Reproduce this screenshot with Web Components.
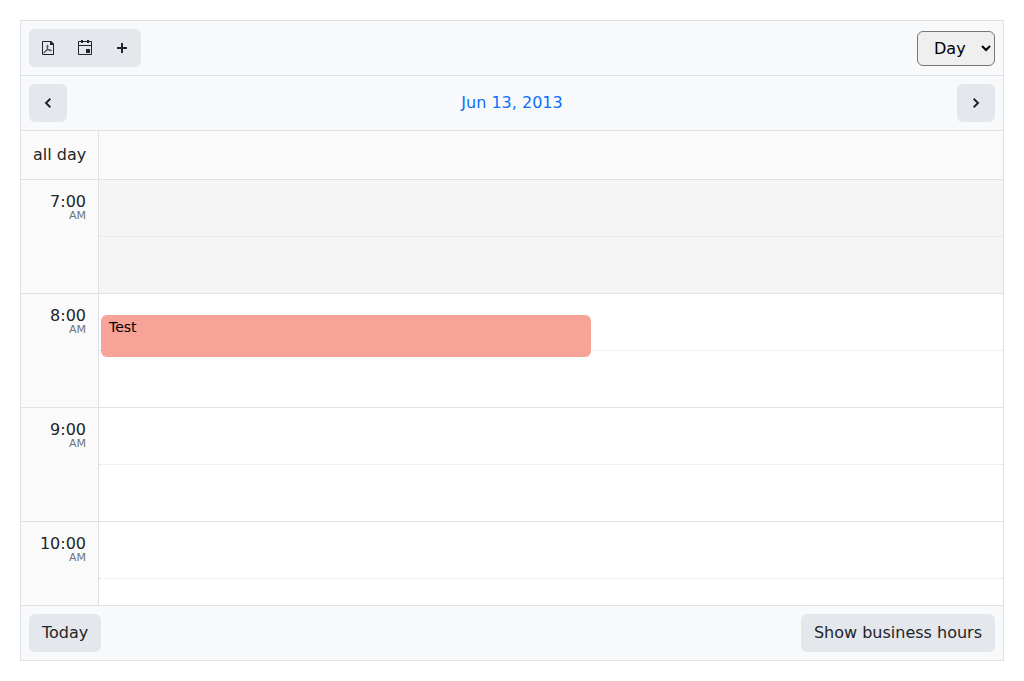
<!DOCTYPE html>
<html lang="en">
<head>
<meta charset="utf-8">
<title>Scheduler</title>
<style>
  html, body { margin: 0; }
  body {
    box-sizing: border-box;
    min-height: 100vh;
    padding: 20px;
    display: flex;
    background: #fff;
    color: #212529;
    font: 16px/24px "DejaVu Sans", sans-serif;
    --border: #dee2e6;
    --bar: #f8f9fb;
    --button: #e4e7eb;
    --radius: 6px;
  }
</style>
</head>
<body>
<day-scheduler></day-scheduler>

<template id="scheduler-template">
  <style>
    :host {
      flex: 1; min-width: 0;
      display: flex; flex-direction: column;
      border: 1px solid var(--border);
    }
    select {
      box-sizing: border-box; width: 78px; height: 35px;
      padding: 0 12px; border: 1px solid #767676; border-radius: var(--radius);
      background: #efefef; color: #000; font: inherit;
    }
    a { color: #0d6efd; text-decoration: none; }
    .group { display: flex; border-radius: var(--radius); background: var(--button); }
    .group tool-button + tool-button { margin-left: -1px; }
    main {
      flex: 1 1 0; min-height: 0;
      overflow-y: auto; scrollbar-width: none;
    }
  </style>
  <tool-bar>
    <div class="group">
      <tool-button icon="pdf" label="Export to PDF"></tool-button>
      <tool-button icon="calendar" label="Pick a date"></tool-button>
      <tool-button icon="plus" label="Add event"></tool-button>
    </div>
    <select aria-label="View"><option>Day</option></select>
  </tool-bar>
  <tool-bar>
    <tool-button icon="prev" label="Previous"></tool-button>
    <a href="#">Jun 13, 2013</a>
    <tool-button icon="next" label="Next"></tool-button>
  </tool-bar>
  <all-day-row>all day</all-day-row>
  <main>
    <hour-row hour="7:00" period="AM" off></hour-row>
    <hour-row hour="8:00" period="AM"><calendar-event>Test</calendar-event></hour-row>
    <hour-row hour="9:00" period="AM"></hour-row>
    <hour-row hour="10:00" period="AM"></hour-row>
  </main>
  <tool-bar footer>
    <tool-button>Today</tool-button>
    <tool-button>Show business hours</tool-button>
  </tool-bar>
</template>

<template id="bar-template">
  <style>
    :host {
      display: flex; align-items: center; justify-content: space-between;
      padding: 8px; background: var(--bar);
      border-bottom: 1px solid var(--border);
    }
    :host([footer]) { border-bottom: 0; border-top: 1px solid var(--border); }
  </style>
  <slot></slot>
</template>

<template id="button-template">
  <style>
    :host { display: block; }
    button {
      box-sizing: border-box; height: 38px; min-width: 38px;
      display: flex; align-items: center; justify-content: center;
      padding: 0 13px; border: 0; border-radius: var(--radius);
      background: var(--button); color: inherit; font: inherit; cursor: pointer;
    }
    button[aria-label] { padding: 0 11px; }
    svg { width: 16px; height: 16px; fill: currentColor; }
  </style>
  <button type="button"><slot></slot></button>
</template>

<template id="all-day-template">
  <style>
    :host {
      display: grid; grid-template-columns: 78px 1fr;
      background: #fafafa; border-bottom: 1px solid var(--border);
    }
    .label {
      padding: 12px; text-align: right; white-space: nowrap;
      box-sizing: border-box; border-right: 1px solid var(--border);
    }
  </style>
  <div class="label"><slot></slot></div>
  <div></div>
</template>

<template id="hour-template">
  <style>
    :host {
      display: grid; grid-template-columns: 78px 1fr;
      box-sizing: border-box; height: 114px;
      border-bottom: 1px solid var(--border);
    }
    .label {
      box-sizing: border-box; padding: 12px 12px 0 0;
      text-align: right; background: #fafafa;
      border-right: 1px solid var(--border);
    }
    .hour { line-height: 19px; }
    .period { font-size: 11px; line-height: 10px; color: #6c757d; }
    .slots { position: relative; display: flex; flex-direction: column; }
    :host([off]) .slots { background: #f5f5f5; }
    .half { height: 56px; border-bottom: 1px dotted var(--border); }
  </style>
  <div class="label"><div class="hour"></div><div class="period"></div></div>
  <div class="slots"><div class="half"></div><slot></slot></div>
</template>

<template id="event-template">
  <style>
    :host {
      position: absolute; top: 21px; left: 2px;
      box-sizing: border-box; width: 54.2%; height: 42px;
      padding: 2px 8px; border-radius: var(--radius);
      background: #f8a398; color: #000; font-size: 14px; line-height: 20px;
    }
  </style>
  <slot></slot>
</template>

<script>
  const ICONS = {
    pdf: '<path fill-rule="evenodd" d="M3 1h8l3 3v11H3a1 1 0 0 1-1-1V2a1 1 0 0 1 1-1zm0 1v12h10V5h-3V2z"/><path d="M10 1h1l3 3v1h-4z"/><path fill="none" stroke="currentColor" stroke-width=".8" d="M7.5 5.200c-.9 0-.5 1.900 0 3.200.6 1.500 1.700 2.300 3.200 2.500.9.1 1-.9-.1-1.100-2-.3-4.300.3-6 1.900-1.400 1-.7 1.700.1.900 1.500-1.500 2.700-3.500 3.100-5.500.2-1.100.1-1.900-.3-1.900z"/>',
    calendar: '<path fill-rule="evenodd" d="M4 0h2v1h4V0h2v1h2a1 1 0 0 1 1 1v12a1 1 0 0 1-1 1H2a1 1 0 0 1-1-1V2a1 1 0 0 1 1-1h2zM2 2v3h12V2h-2v1h-2V2H6v1H4V2zm0 4v8h12V6zm7 3h4v4H9z"/>',
    plus: '<path d="M7 3h2v4h4v2H9v4H7V9H3V7h4z"/>',
    prev: '<path d="M9.600 3 11 4.400 7.400 8 11 11.600 9.600 13l-5-5z"/>',
    next: '<path d="M6.400 3 5 4.400 8.600 8 5 11.600 6.400 13l5-5z"/>'
  };

  function component(name, templateId, setup) {
    customElements.define(name, class extends HTMLElement {
      constructor() {
        super();
        const root = this.attachShadow({ mode: 'open' });
        root.append(document.getElementById(templateId).content.cloneNode(true));
      }
      connectedCallback() { if (setup) setup(this, this.shadowRoot); }
    });
  }

  component('tool-bar', 'bar-template');
  component('tool-button', 'button-template', (host, root) => {
    const icon = host.getAttribute('icon');
    if (!icon) return;
    const button = root.querySelector('button');
    button.setAttribute('aria-label', host.getAttribute('label'));
    button.innerHTML = `<svg viewBox="0 0 16 16" aria-hidden="true">${ICONS[icon]}</svg>`;
  });
  component('all-day-row', 'all-day-template');
  component('hour-row', 'hour-template', (host, root) => {
    root.querySelector('.hour').textContent = host.getAttribute('hour');
    root.querySelector('.period').textContent = host.getAttribute('period');
  });
  component('calendar-event', 'event-template');
  component('day-scheduler', 'scheduler-template');
</script>
</body>
</html>
